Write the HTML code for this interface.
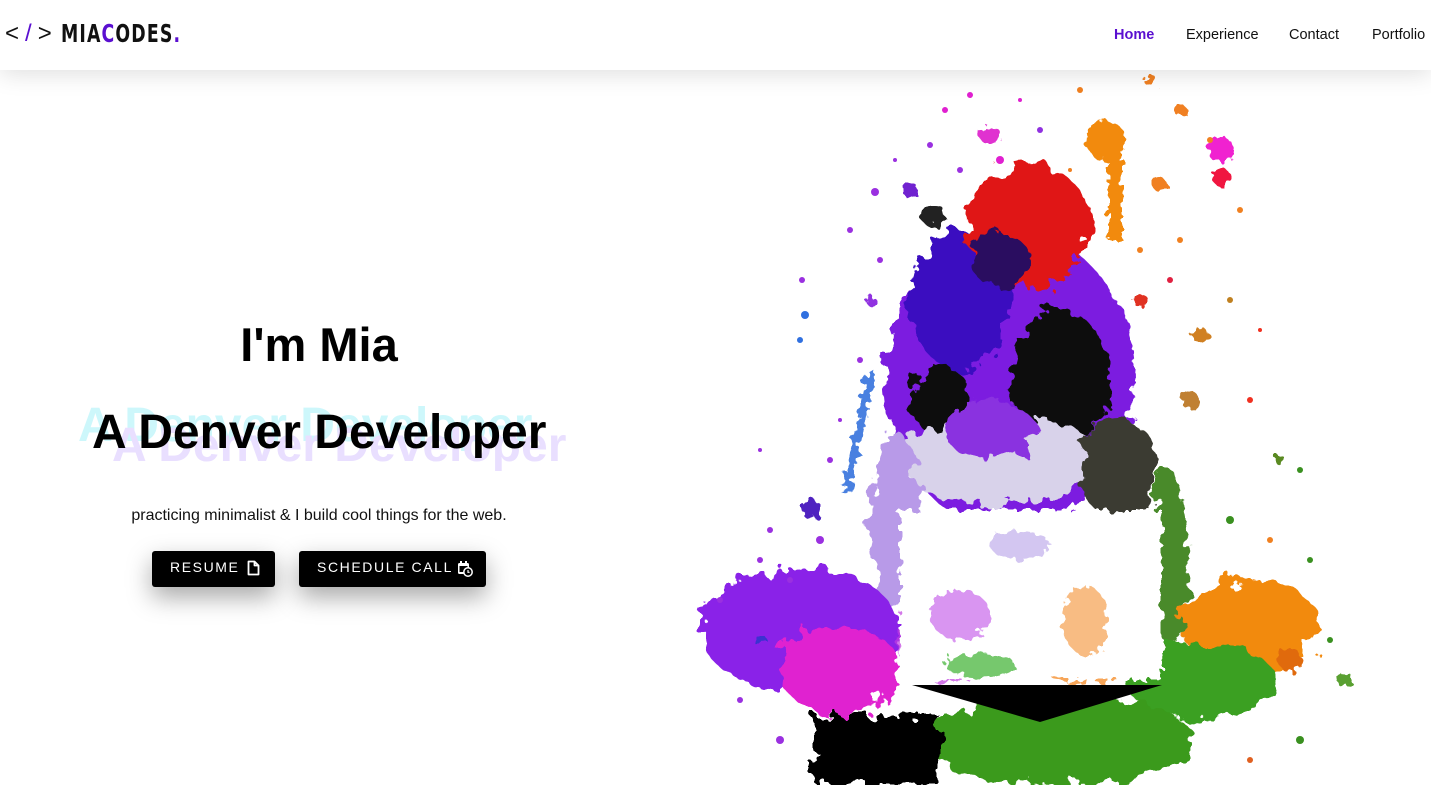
<!DOCTYPE html>
<html><head><meta charset="utf-8">
<style>
*{margin:0;padding:0;box-sizing:border-box}
body{width:1431px;height:785px;overflow:hidden;background:#fff;font-family:"Liberation Sans",sans-serif;position:relative}
.nav{position:absolute;top:0;left:0;width:1431px;height:70px;background:#fff;box-shadow:0 4px 24px rgba(0,0,0,.13);z-index:5}
.logo{position:absolute;left:5px;top:20px;font-size:24px;letter-spacing:6px;color:#111}
.logo .sl{color:#5a0fd0}
.brand{position:absolute;left:61px;top:19px;font-family:"DejaVu Sans Condensed","Liberation Sans Narrow",sans-serif;font-weight:bold;font-size:25px;letter-spacing:1.5px;transform:scaleX(.77);transform-origin:left;color:#111}
.brand .c{color:#5a0fd0}
.links a{position:absolute;top:27px;font-size:14.5px;color:#111;text-decoration:none}
h1{position:absolute;left:0;width:638px;text-align:center;top:317px;font-size:47px;font-weight:bold;color:#000}
.dev{position:absolute;top:405px;font-size:48px;font-weight:bold;white-space:nowrap}
p.t{position:absolute;left:0;width:638px;text-align:center;top:507px;font-size:16px;color:#111}
.btn{position:absolute;top:551px;height:36px;background:#000;color:#fff;border-radius:3px;font-size:14px;letter-spacing:1.6px;line-height:33px;padding-left:18px;box-shadow:0 10px 25px rgba(0,0,0,.35)}
.btn svg{position:absolute;top:9px}
</style></head><body>
<svg style="position:absolute;left:0;top:0" width="1431" height="785">
<defs>
<filter id="sp" x="-20%" y="-20%" width="140%" height="140%"><feTurbulence type="fractalNoise" baseFrequency="0.06" numOctaves="3" seed="3"/><feDisplacementMap in="SourceGraphic" scale="28"/></filter>
<filter id="sp2"><feTurbulence type="fractalNoise" baseFrequency="0.12" numOctaves="2" seed="7"/><feDisplacementMap in="SourceGraphic" scale="14"/></filter>
</defs>
<g filter="url(#sp)">
<ellipse cx="1010" cy="380" rx="125" ry="150" fill="#7b1fe0"/>
<ellipse cx="960" cy="300" rx="50" ry="70" fill="#3a10c0"/>
<ellipse cx="1060" cy="380" rx="50" ry="70" fill="#111"/>
<ellipse cx="940" cy="400" rx="30" ry="35" fill="#111"/>
<circle cx="1028" cy="225" r="62" fill="#e01818"/>
<circle cx="1000" cy="260" r="28" fill="#2a0a60"/>
<ellipse cx="1000" cy="460" rx="100" ry="45" fill="#d8d2ea"/>
<ellipse cx="990" cy="430" rx="45" ry="30" fill="#8a30e0"/>
<ellipse cx="1120" cy="470" rx="40" ry="50" fill="#3a3a30"/>
<ellipse cx="895" cy="520" rx="25" ry="90" fill="#b89ae8"/>
<ellipse cx="1170" cy="560" rx="18" ry="90" fill="#4a8a2a"/>
<ellipse cx="800" cy="630" rx="100" ry="62" fill="#8a20e8"/>
<ellipse cx="840" cy="670" rx="60" ry="45" fill="#e020d0"/>
<ellipse cx="1250" cy="625" rx="70" ry="45" fill="#f28a10"/>
<ellipse cx="1200" cy="680" rx="75" ry="38" fill="#3aa020"/>
<ellipse cx="1060" cy="740" rx="135" ry="45" fill="#3a9a1a"/>
<rect x="814" y="715" width="125" height="70" fill="#000"/>
<ellipse cx="1085" cy="640" rx="55" ry="45" fill="#f59030" opacity=".8"/>
<ellipse cx="950" cy="640" rx="55" ry="40" fill="#c040e0" opacity=".7"/>
</g>
<rect x="900" y="510" width="262" height="170" fill="#fff" filter="url(#sp2)"/>
<circle cx="1035" cy="605" r="35" fill="#fff"/>
<g filter="url(#sp2)">
<ellipse cx="1085" cy="620" rx="22" ry="35" fill="#f5a050" opacity=".7"/>
<ellipse cx="960" cy="615" rx="30" ry="25" fill="#c050e8" opacity=".6"/>
<ellipse cx="980" cy="665" rx="35" ry="12" fill="#3ab030" opacity=".7"/>
<ellipse cx="1020" cy="545" rx="30" ry="14" fill="#c8b8ee" opacity=".8"/>
</g>
<polygon points="912,685 1162,685 1040,722" fill="#000"/>
<g filter="url(#sp2)">
<circle cx="1106" cy="141" r="20" fill="#f28a10"/>
<rect x="1108" y="150" width="14" height="90" fill="#f28a10"/>
<circle cx="1221" cy="150" r="13" fill="#f020d0"/>
<circle cx="1221" cy="177" r="9" fill="#f01840"/>
<rect x="855" y="370" width="8" height="125" fill="#4a80e0" transform="rotate(12 860 430)"/>
<circle cx="933" cy="215" r="12" fill="#222"/>
<circle cx="990" cy="135" r="10" fill="#e030d0"/>
<circle cx="1290" cy="660" r="12" fill="#e06a10"/>
<circle cx="1345" cy="680" r="8" fill="#5aa030"/>
<circle cx="812" cy="510" r="10" fill="#5020c0"/>
<circle cx="1200" cy="335" r="8" fill="#d08020"/>
<circle cx="1160" cy="185" r="7" fill="#f08020"/>
<circle cx="1280" cy="460" r="5" fill="#5a8a20"/>
<circle cx="1180" cy="110" r="6" fill="#f08020"/>
<circle cx="1150" cy="80" r="6" fill="#f08020"/>
<circle cx="910" cy="190" r="8" fill="#7020d0"/>
<circle cx="870" cy="300" r="5" fill="#9030e0"/>
<circle cx="1140" cy="300" r="7" fill="#e03020"/>
<circle cx="1190" cy="400" r="9" fill="#c08030"/>
<circle cx="760" cy="640" r="6" fill="#3a30d0"/>
</g>
<g fill="#9a30e0">
<circle cx="802" cy="280" r="3"/><circle cx="875" cy="192" r="4"/><circle cx="930" cy="145" r="3"/><circle cx="770" cy="530" r="3"/><circle cx="880" cy="260" r="3"/><circle cx="760" cy="450" r="2"/><circle cx="830" cy="460" r="3"/><circle cx="790" cy="580" r="3"/><circle cx="970" cy="95" r="3" fill="#e020d0"/><circle cx="1020" cy="100" r="2" fill="#e020d0"/><circle cx="1180" cy="240" r="3" fill="#f08020"/><circle cx="1250" cy="400" r="3" fill="#f03020"/><circle cx="1300" cy="470" r="3" fill="#3a9020"/><circle cx="1310" cy="560" r="3" fill="#3a9020"/><circle cx="720" cy="600" r="3"/><circle cx="805" cy="315" r="4" fill="#3070e0"/><circle cx="800" cy="340" r="3" fill="#3070e0"/>
<circle cx="850" cy="230" r="3"/><circle cx="895" cy="160" r="2"/><circle cx="945" cy="110" r="3" fill="#e020d0"/><circle cx="1000" cy="160" r="4" fill="#e020d0"/><circle cx="960" cy="170" r="3"/><circle cx="860" cy="360" r="3"/><circle cx="840" cy="420" r="2"/><circle cx="820" cy="540" r="4"/><circle cx="760" cy="560" r="3"/><circle cx="740" cy="700" r="3"/><circle cx="780" cy="740" r="4"/><circle cx="1140" cy="250" r="3" fill="#f08020"/><circle cx="1170" cy="280" r="3" fill="#e02040"/><circle cx="1230" cy="300" r="3" fill="#c08020"/><circle cx="1260" cy="330" r="2" fill="#f03020"/><circle cx="1230" cy="520" r="4" fill="#3a9020"/><circle cx="1270" cy="540" r="3" fill="#f08020"/><circle cx="1330" cy="640" r="3" fill="#3a9020"/><circle cx="1300" cy="740" r="4" fill="#3a9020"/><circle cx="1250" cy="760" r="3" fill="#e06020"/><circle cx="1210" cy="140" r="3" fill="#f08020"/><circle cx="1240" cy="210" r="3" fill="#f08020"/><circle cx="1080" cy="90" r="3" fill="#f08020"/><circle cx="1040" cy="130" r="3" fill="#9030e0"/><circle cx="1070" cy="170" r="2" fill="#f08020"/>
</g>
</svg>
<div class="nav">
<div class="logo">&lt;<span class="sl">/</span>&gt;</div>
<div class="brand">MIA<span class="c">C</span>ODES<span class="c">.</span></div>
<div class="links">
<a style="left:1114px;color:#5a0fd0;font-weight:bold">Home</a>
<a style="left:1186px">Experience</a>
<a style="left:1289px">Contact</a>
<a style="left:1372px">Portfolio</a>
</div>
</div>
<h1>I'm Mia</h1>
<div class="dev" style="left:78px;top:398px;color:#cdf7fb">A Denver Developer</div>
<div class="dev" style="left:112px;top:418px;color:#e9dfff">A Denver Developer</div>
<div class="dev" style="left:92px;color:#000">A Denver Developer</div>
<p class="t">practicing minimalist &amp; I build cool things for the web.</p>
<div class="btn" style="left:152px;width:123px">RESUME
<svg style="left:95px" width="13" height="16" viewBox="0 0 13 16"><path d="M1.5 1.5h6l4 4v9h-10z M7.5 1.5v4h4" fill="none" stroke="#fff" stroke-width="1.8" stroke-linejoin="round"/></svg></div>
<div class="btn" style="left:299px;width:187px">SCHEDULE CALL
<svg style="left:158px" width="16" height="17" viewBox="0 0 16 17"><rect x="1" y="3" width="11" height="11" rx="1.5" fill="#fff"/><rect x="3" y="1" width="2" height="3" fill="#fff"/><rect x="8" y="1" width="2" height="3" fill="#fff"/><rect x="2.5" y="6" width="8" height="6" fill="#000"/><circle cx="11" cy="12" r="4.2" fill="#000" stroke="#fff" stroke-width="1.5"/><path d="M11 10v2.3h1.6" stroke="#fff" stroke-width="1.2" fill="none"/></svg></div>
</body></html>
